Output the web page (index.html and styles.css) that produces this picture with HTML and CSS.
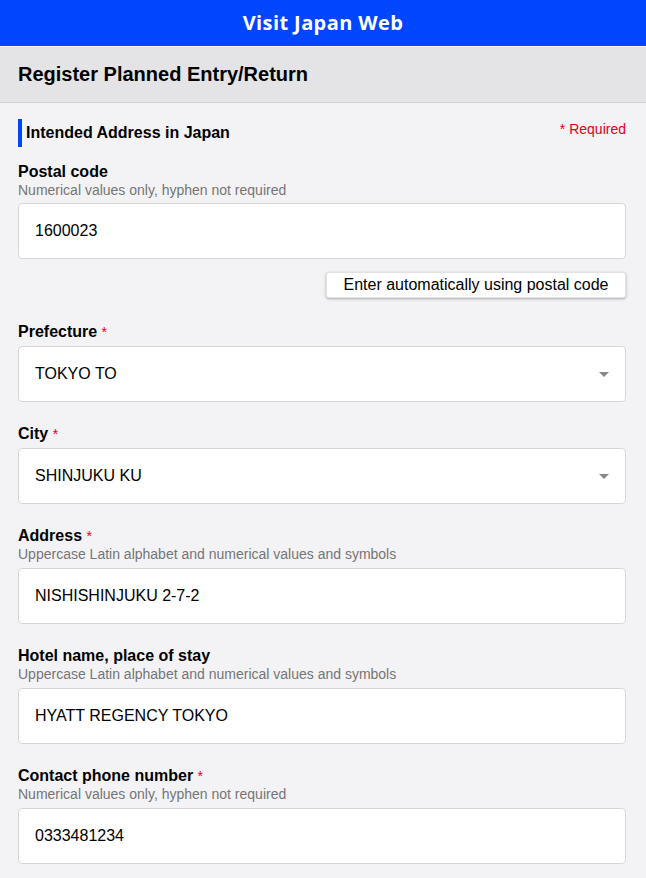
FILE: index.html
```html
<!DOCTYPE html>
<html lang="en">
<head>
<meta charset="utf-8">
<title>Visit Japan Web</title>
<link rel="stylesheet" href="styles.css">
</head>
<body>
<header class="topbar">Visit Japan Web</header>
<div class="pagehead">Register Planned Entry/Return</div>
<main class="content">
  <div class="section-head">
    <h2 class="section-title">Intended Address in Japan</h2>
    <span class="required-note">* Required</span>
  </div>

  <div class="field first">
    <div class="label">Postal code</div>
    <div class="hint">Numerical values only, hyphen not required</div>
    <div class="box">1600023</div>
  </div>
  <div class="btn-row"><button class="btn">Enter automatically using postal code</button></div>

  <div class="field after-btn">
    <div class="label">Prefecture <span class="star">*</span></div>
    <div class="box select">TOKYO TO<span class="caret"></span></div>
  </div>

  <div class="field">
    <div class="label">City <span class="star">*</span></div>
    <div class="box select">SHINJUKU KU<span class="caret"></span></div>
  </div>

  <div class="field">
    <div class="label">Address <span class="star">*</span></div>
    <div class="hint">Uppercase Latin alphabet and numerical values and symbols</div>
    <div class="box">NISHISHINJUKU 2-7-2</div>
  </div>

  <div class="field">
    <div class="label">Hotel name, place of stay</div>
    <div class="hint">Uppercase Latin alphabet and numerical values and symbols</div>
    <div class="box">HYATT REGENCY TOKYO</div>
  </div>

  <div class="field">
    <div class="label">Contact phone number <span class="star">*</span></div>
    <div class="hint">Numerical values only, hyphen not required</div>
    <div class="box">0333481234</div>
  </div>
</main>
</body>
</html>
```
FILE: styles.css
```css
* { box-sizing: border-box; }
html, body { margin: 0; padding: 0; }
body {
  background: #f3f3f5;
  font-family: "Liberation Sans", Arial, sans-serif;
  color: #000;
}
.topbar {
  height: 46px;
  background: #0046ff;
  color: #fff;
  font-family: "Open Sans", sans-serif;
  font-weight: 700;
  font-size: 20px;
  letter-spacing: 0.4px;
  display: flex;
  align-items: center;
  justify-content: center;
  padding-bottom: 1px;
}
.pagehead {
  height: 56px;
  background: #e4e4e6;
  border-bottom: 1px solid #d2d2d4;
  padding: 0 18px;
  display: flex;
  align-items: center;
  font-size: 20px;
  font-weight: 700;
  margin-top: 1px;
}
.content {
  padding: 16px 20px 20px 18px;
}
.section-head {
  display: flex;
  justify-content: space-between;
  align-items: flex-start;
}
.section-title {
  margin: 0;
  font-size: 16px;
  font-weight: 700;
  border-left: 4px solid #0046ff;
  padding-left: 4px;
  height: 28px;
  line-height: 28px;
}
.required-note {
  color: #e0001b;
  font-size: 14px;
  line-height: 20px;
}
.field { margin-top: 23px; }
.field.first { margin-top: 16px; }
.field.after-btn { margin-top: 25px; }
.label {
  font-size: 16px;
  font-weight: 700;
  line-height: 18px;
}
.star { color: #e0001b; font-weight: 400; font-size: 14px; }
.hint {
  font-size: 14px;
  color: #757575;
  line-height: 18px;
}
.box {
  margin-top: 5px;
  height: 56px;
  background: #fff;
  border: 1px solid #d6d6d8;
  border-radius: 4px;
  padding: 0 16px;
  display: flex;
  align-items: center;
  font-size: 16px;
  position: relative;
}
.first .box { margin-top: 4px; }
.caret {
  position: absolute;
  right: 16px;
  top: 25px;
  width: 0;
  height: 0;
  border-left: 5px solid transparent;
  border-right: 5px solid transparent;
  border-top: 5px solid #888;
}
.btn-row {
  display: flex;
  justify-content: flex-end;
  margin-top: 13px;
}
.btn {
  width: 300px;
  height: 26px;
  background: #fff;
  border: 1px solid #e2e2e2;
  border-radius: 3px;
  box-shadow: 0 1px 3px rgba(0,0,0,0.3);
  font-family: "Liberation Sans", Arial, sans-serif;
  font-size: 16px;
  color: #000;
  padding: 0;
}
```
